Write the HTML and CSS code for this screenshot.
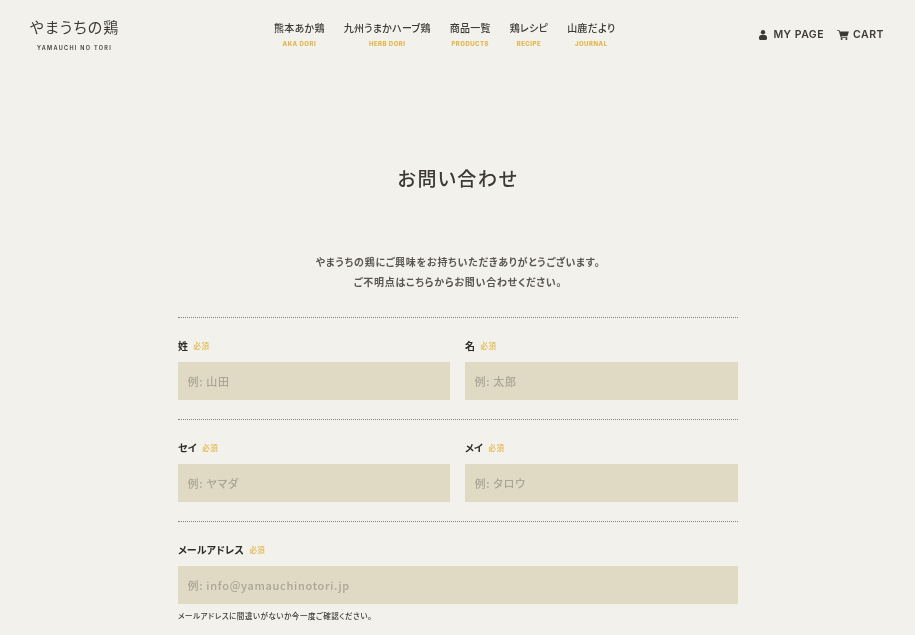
FILE: index.html
```html
<!DOCTYPE html>
<html lang="ja">
<head>
<meta charset="utf-8">
<title>お問い合わせ | やまうちの鶏</title>
<link rel="stylesheet" href="styles.css">
</head>
<body>
<header class="site-header">
  <a class="logo" href="#">
    <span class="logo-jp">やまうちの鶏</span>
    <span class="logo-en">YAMAUCHI NO TORI</span>
  </a>
  <nav class="main-nav">
    <a class="nav-item" href="#"><span class="nav-jp">熊本あか鶏</span><span class="nav-en">AKA DORI</span></a>
    <a class="nav-item" href="#"><span class="nav-jp">九州うまかハーブ鶏</span><span class="nav-en">HERB DORI</span></a>
    <a class="nav-item" href="#"><span class="nav-jp">商品一覧</span><span class="nav-en">PRODUCTS</span></a>
    <a class="nav-item" href="#"><span class="nav-jp">鶏レシピ</span><span class="nav-en">RECIPE</span></a>
    <a class="nav-item" href="#"><span class="nav-jp">山鹿だより</span><span class="nav-en">JOURNAL</span></a>
  </nav>
  <div class="user-nav">
    <a class="user-link" href="#">
      <svg class="icon-user" viewBox="0 0 8 10" aria-hidden="true"><circle cx="4" cy="2.300" r="2.200"/><path d="M1.300 10C.5 10 0 9.500 0 8.800V7.300C0 6 1 5 2.300 5h3.400C7 5 8 6 8 7.300v1.500C8 9.500 7.500 10 6.700 10z"/></svg>
      MY PAGE
    </a>
    <a class="user-link" href="#">
      <svg class="icon-cart" viewBox="0 0 13 11" aria-hidden="true"><path d="M0 .2h2.600l.6 1.500H13l-1.600 4.900H4.700l.3.900h6.300v1H4L1.900 1.200H0z"/><circle cx="5" cy="9.800" r="1.100"/><circle cx="10.200" cy="9.800" r="1.100"/></svg>
      CART
    </a>
  </div>
</header>

<main class="contact">
  <h1 class="page-title">お問い合わせ</h1>
  <p class="intro">やまうちの鶏にご興味をお持ちいただきありがとうございます。<br>ご不明点はこちらからお問い合わせください。</p>
  <form class="form">
    <div class="form-row form-row-split">
      <div class="field">
        <label class="field-label">姓<span class="required">必須</span></label>
        <input class="field-input" type="text" placeholder="例: 山田">
      </div>
      <div class="field">
        <label class="field-label">名<span class="required">必須</span></label>
        <input class="field-input" type="text" placeholder="例: 太郎">
      </div>
    </div>
    <div class="form-row form-row-split">
      <div class="field">
        <label class="field-label">セイ<span class="required">必須</span></label>
        <input class="field-input" type="text" placeholder="例: ヤマダ">
      </div>
      <div class="field">
        <label class="field-label">メイ<span class="required">必須</span></label>
        <input class="field-input" type="text" placeholder="例: タロウ">
      </div>
    </div>
    <div class="form-row">
      <div class="field">
        <label class="field-label">メールアドレス<span class="required">必須</span></label>
        <input class="field-input" type="text" placeholder="例: info@yamauchinotori.jp">
        <p class="field-note">メールアドレスに間違いがないか今一度ご確認ください。</p>
      </div>
    </div>
  </form>
</main>
</body>
</html>
```
FILE: styles.css
```css
* { box-sizing: border-box; }
html, body { margin: 0; padding: 0; }
body {
  width: 915px;
  height: 635px;
  overflow: hidden;
  background: #f2f1eb;
  color: #3d3a35;
  font-family: "Noto Sans CJK JP", "Noto Sans", sans-serif;
  font-feature-settings: "palt";
}
a { color: inherit; text-decoration: none; }

.site-header {
  display: flex;
  justify-content: space-between;
  align-items: flex-start;
  height: 70px;
  padding: 0 31px 0 30px;
  filter: blur(0.35px);
}
.logo { display: flex; flex-direction: column; align-items: center; width: 89px; padding-top: 16px; }
.logo-jp { font-size: 15px; line-height: 22px; letter-spacing: 1.100px; white-space: nowrap; }
.logo-en {
  font-family: "Inter", "Lato", sans-serif;
  font-size: 5.500px; font-weight: 600; line-height: 8px; letter-spacing: 1.300px;
  margin-top: 6px; white-space: nowrap;
}
.main-nav { display: flex; gap: 19px; padding-top: 20px; margin-left: 11px; }
.nav-item { display: flex; flex-direction: column; align-items: center; }
.nav-jp { font-size: 10px; font-weight: 500; line-height: 15px; letter-spacing: 0.250px; white-space: nowrap; }
.nav-en {
  font-family: "Inter", "Lato", sans-serif;
  font-size: 6px; font-weight: 800; line-height: 9px; letter-spacing: 0.500px;
  color: #e3b548; margin-top: 4px; white-space: nowrap;
}
.user-nav { display: flex; gap: 13px; padding-top: 27px; }
.user-link {
  display: flex; align-items: center; gap: 6px;
  font-family: "Inter", "Lato", sans-serif;
  font-size: 10.500px; font-weight: 600; line-height: 16px; letter-spacing: 0.500px;
  white-space: nowrap;
}
.user-link + .user-link { gap: 4px; }
.icon-user { width: 8px; height: 10px; fill: currentColor; }
.icon-cart { width: 12px; height: 10px; fill: currentColor; }

.contact { display: flex; flex-direction: column; align-items: center; padding-left: 1px; filter: blur(0.35px); }
.page-title {
  margin: 93px 0 0;
  font-size: 19px; line-height: 30px; font-weight: 500; letter-spacing: 1.500px;
}
.intro {
  margin: 59px 0 0;
  font-size: 10px; line-height: 20px; font-weight: 700; letter-spacing: 0.750px;
  text-align: center; color: #5a5750;
}
.form { width: 560px; margin-top: 25px; }
.form-row {
  height: 102px;
  padding-top: 19px;
  border-top: 1px dotted #86837b;
}
.form-row-split { display: grid; grid-template-columns: 272px 273px; column-gap: 15px; }
.field-label {
  display: flex; align-items: center; height: 16px;
  font-size: 10px; font-weight: 700; color: #2f2c28; letter-spacing: 0.100px;
}
.required {
  font-size: 7.500px; font-weight: 500; color: #e3b548; margin-left: 5.500px; letter-spacing: 0.500px;
}
.field-input {
  display: block; width: 100%; height: 38px; margin-top: 9px;
  padding: 0 9.500px; border: 0; border-radius: 0;
  background: #e0d9c3;
  font-family: "Noto Sans CJK JP", "Noto Sans", sans-serif;
  font-feature-settings: "palt";
  font-size: 11px; font-weight: 500; letter-spacing: 0.700px; color: #3d3a35;
}
.field-input::placeholder { color: #aaa595; opacity: 1; }
.field-note { margin: 6px 0 0; font-size: 7.500px; line-height: 11px; letter-spacing: 0.550px; font-weight: 500; }
```
